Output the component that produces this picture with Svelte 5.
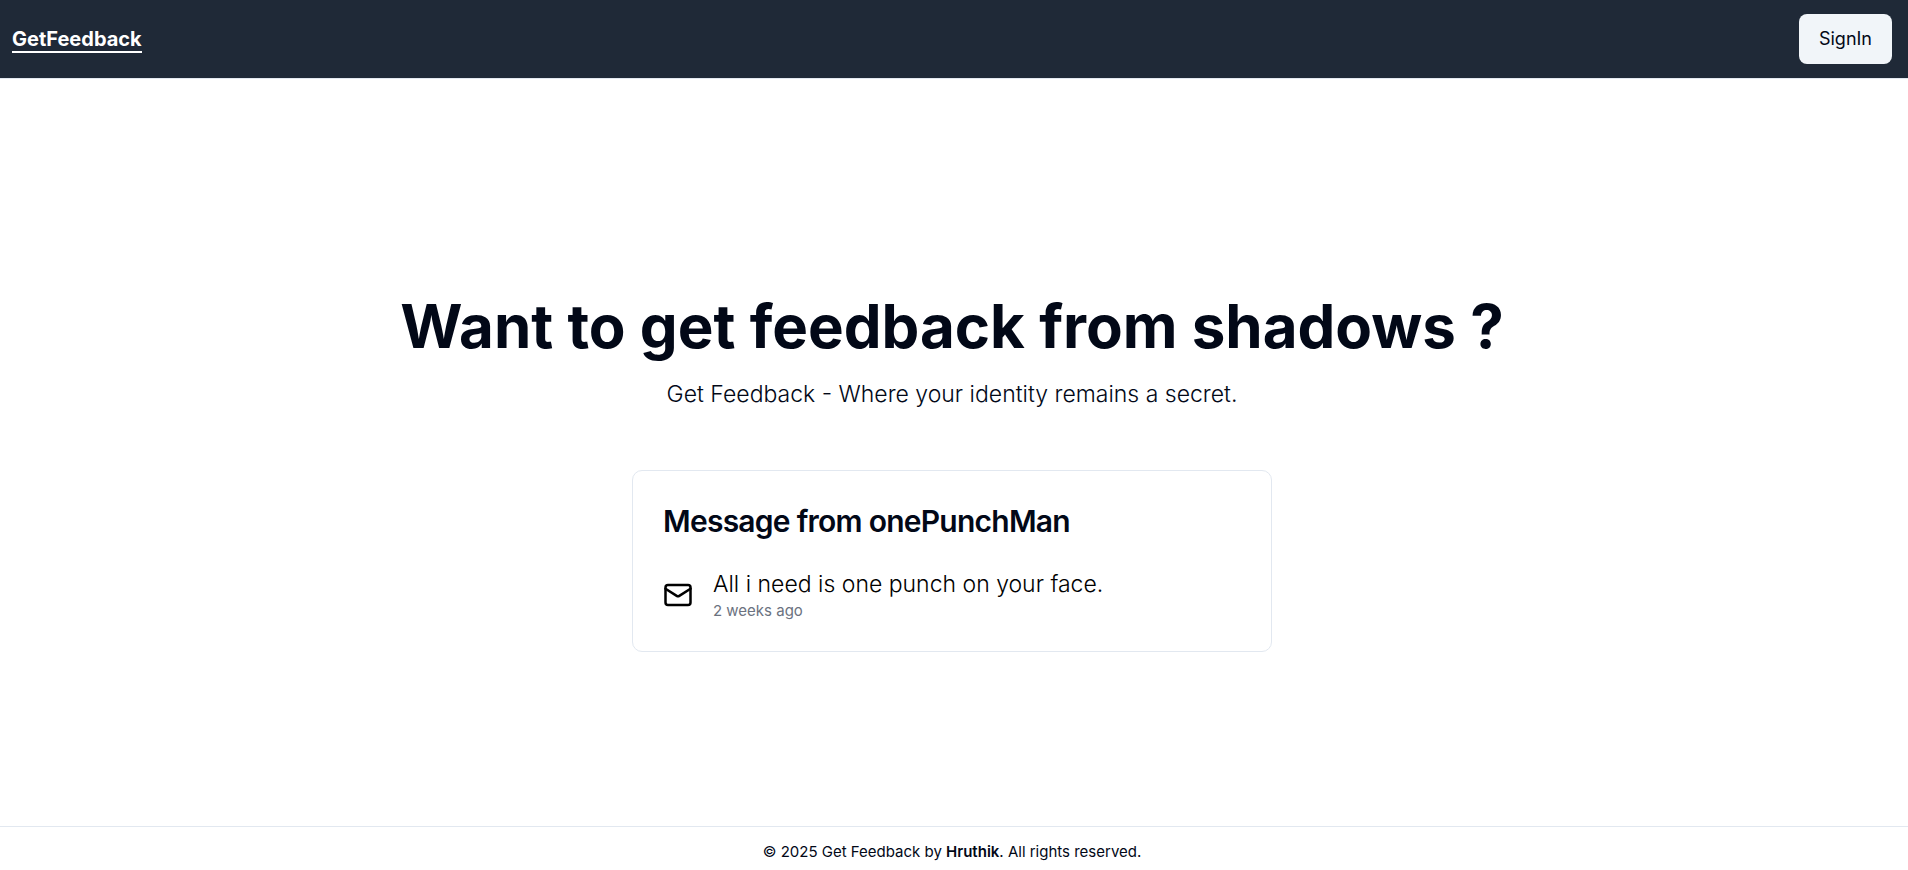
<script>
  const messages = [
    { from: 'onePunchMan', text: 'All i need is one punch on your face.', age: '2 weeks ago' }
  ];
</script>

<div class="page">
  <header>
    <a class="brand" href="#home">GetFeedback</a>
    <button type="button">SignIn</button>
  </header>

  <main>
    <section class="intro">
      <h1>Want to get feedback from shadows ?</h1>
      <p>Get Feedback - Where your identity remains a secret.</p>
    </section>

    {#each messages as message}
      <article class="card">
        <h2>Message from {message.from}</h2>
        <div class="message">
          <svg viewBox="0 0 24 24" aria-hidden="true">
            <rect width="20" height="16" x="2" y="4" rx="2" />
            <path d="m22 7-8.97 5.7a1.94 1.94 0 0 1-2.06 0L2 7" />
          </svg>
          <div>
            <p class="text">{message.text}</p>
            <p class="age">{message.age}</p>
          </div>
        </div>
      </article>
    {/each}
  </main>

  <footer>© 2025 Get Feedback by <strong>Hruthik</strong>. All rights reserved.</footer>
</div>

<style>
  :global(body) {
    margin: 0;
    background: #fff;
    color: #020817;
    font-family: Inter, sans-serif;
  }

  .page {
    min-height: 100vh;
    display: flex;
    flex-direction: column;
  }

  h1, h2, p {
    margin: 0;
  }

  header {
    display: flex;
    align-items: center;
    justify-content: space-between;
    padding: 14px 16px 14px 12px;
    background: #1f2937;
    border-bottom: 1px solid #e2e8f0;
  }

  .brand {
    padding-top: 2px;
    color: #fff;
    font-size: 20px;
    font-weight: 700;
    line-height: 24px;
    text-decoration: none;
    border-bottom: 2px solid #fff;
  }

  button {
    padding: 11px 20px;
    border: 0;
    border-radius: 8px;
    background: #f1f5f9;
    color: #020817;
    font: 400 18px/28px Inter, sans-serif;
    cursor: pointer;
  }

  main {
    flex: 1;
    display: flex;
    flex-direction: column;
    align-items: center;
    justify-content: center;
    gap: 60px;
    padding: 62px 16px 20px 12px;
  }

  .intro {
    text-align: center;
  }

  h1 {
    font-size: 60px;
    font-weight: 700;
    line-height: 60px;
  }

  .intro p {
    margin-top: 22px;
    font-size: 23px;
    font-weight: 300;
    line-height: 32px;
  }

  .card {
    box-sizing: border-box;
    width: 100%;
    max-width: 640px;
    padding: 32px 30px 29px;
    border: 1px solid #e2e8f0;
    border-radius: 10px;
  }

  h2 {
    font-size: 30px;
    font-weight: 600;
    line-height: 36px;
    letter-spacing: -0.025em;
  }

  .message {
    display: flex;
    align-items: center;
    gap: 20px;
    margin-top: 29px;
    color: #000;
  }

  svg {
    flex: none;
    width: 30px;
    height: 30px;
    fill: none;
    stroke: currentColor;
    stroke-width: 2;
    stroke-linecap: round;
    stroke-linejoin: round;
  }

  .text {
    font-size: 23px;
    font-weight: 300;
    line-height: 32px;
  }

  .age {
    color: #6b7280;
    font-size: 15px;
    line-height: 22px;
  }

  footer {
    padding: 15px 16px 8px 12px;
    border-top: 1px solid #e2e8f0;
    font-size: 15px;
    line-height: 20px;
    text-align: center;
  }

  strong {
    font-weight: 600;
  }
</style>
